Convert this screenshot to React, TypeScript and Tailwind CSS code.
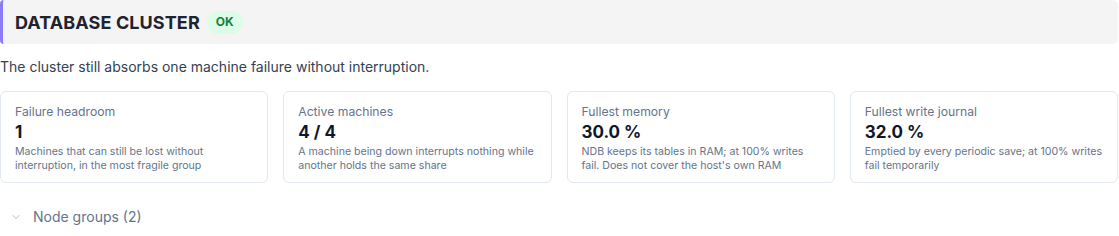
import React from "react";
import { ChevronDown } from "lucide-react";

const cards = [
  {
    title: "Failure headroom",
    value: "1",
    desc: "Machines that can still be lost without interruption, in the most fragile group",
  },
  {
    title: "Active machines",
    value: "4 / 4",
    desc: "A machine being down interrupts nothing while another holds the same share",
  },
  {
    title: "Fullest memory",
    value: "30.0 %",
    desc: "NDB keeps its tables in RAM; at 100% writes fail. Does not cover the host's own RAM",
  },
  {
    title: "Fullest write journal",
    value: "32.0 %",
    desc: "Emptied by every periodic save; at 100% writes fail temporarily",
  },
];

const StatCard = ({ card }: { card: (typeof cards)[number] }) => (
  <div className="rounded-md border border-[#e2e8f0] bg-white pl-[14px] pr-3 pt-[12px] h-[92px]">
    <div className="text-[12.2px] leading-[16px] text-[#64748b]">{card.title}</div>
    <div className="text-[17px] leading-[22px] font-bold text-[#0f172a] mt-[1px]">{card.value}</div>
    <div className="text-[10.6px] leading-[14px] text-[#64748b] mt-[2px]">{card.desc}</div>
  </div>
);

export default function App() {
  return (
    <div
      className="w-[1118px] bg-white"
      style={{ fontFamily: "Inter, 'Noto Sans', sans-serif" }}
    >
      <div className="flex items-center h-[44px] bg-[#f4f4f4] rounded-r-md rounded-l-[4px] border-l-[3px] border-[#8b7cf6] pl-3">
        <h2 className="text-[18px] font-bold tracking-[0.1px] text-[#1e2330]">DATABASE CLUSTER</h2>
        <span className="ml-[7px] rounded-full bg-[#dcfce7] px-[9px] h-[23px] flex items-center text-[12px] font-bold text-[#15803d]">
          OK
        </span>
      </div>

      <p className="mt-[14px] text-[14px] leading-[18px] text-[#334155]">
        The cluster still absorbs one machine failure without interruption.
      </p>

      <div className="mt-[15px] grid grid-cols-4 gap-[15px]">
        {cards.map((c) => (
          <StatCard key={c.title} card={c} />
        ))}
      </div>

      <div className="mt-[23px] flex items-center pl-[10px] text-[14px] text-[#64748b]">
        <ChevronDown size={12} strokeWidth={1.5} className="text-[#94a3b8]" />
        <span className="ml-[11px]">Node groups (2)</span>
      </div>
    </div>
  );
}
